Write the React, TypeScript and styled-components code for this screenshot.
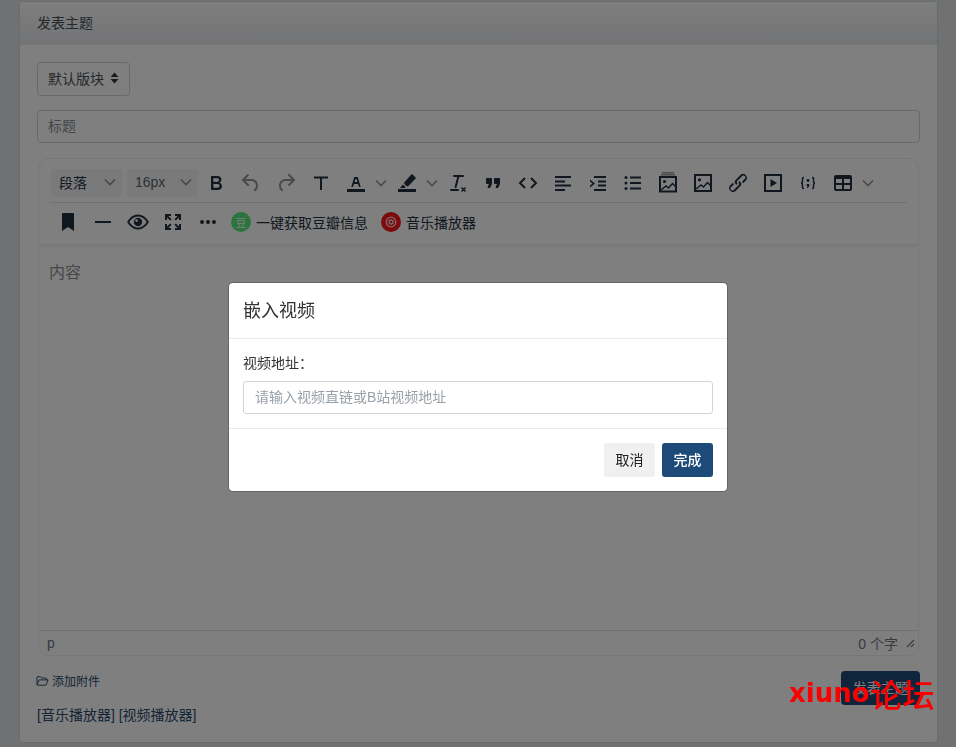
import * as React from 'react';
import styled, { createGlobalStyle } from 'styled-components';

const GlobalStyle = createGlobalStyle`
  html, body {
    margin: 0;
    padding: 0;
    background: #dee2e6;
    overflow: hidden;
  }
  body, input, button {
    font-family: "Liberation Sans", "Noto Sans CJK SC", sans-serif;
  }
  * { box-sizing: border-box; }
`;

const Page = styled.div`
  width: 956px;
  height: 747px;
  padding: 1px 18px 4px 19px;
`;

const Card = styled.main`
  height: 742px;
  background: #fff;
  border: 1px solid #d4d6d9;
  border-radius: 3px;
  display: flex;
  flex-direction: column;
`;

const CardHeader = styled.header`
  height: 43px;
  flex: none;
  padding: 0 17px 3px;
  display: flex;
  align-items: center;
  font-size: 14px;
  color: #495057;
  background: linear-gradient(#fcfdfd, #e6e8eb);
  border-bottom: 1px solid #eceef0;
`;

const CardBody = styled.div`
  flex: 1;
  padding: 17px 17px 0;
  display: flex;
  flex-direction: column;
`;

const ForumSelect = styled.div`
  width: 93px;
  height: 34px;
  border: 1px solid #ced4da;
  border-radius: 4px;
  padding: 0 10px 2px;
  display: flex;
  align-items: center;
  justify-content: space-between;
  font-size: 14px;
  color: #495057;
`;

const TitleInput = styled.input`
  display: block;
  width: 883px;
  height: 33px;
  margin-top: 14px;
  padding: 0 10px 2px;
  border: 1px solid #ced4da;
  border-radius: 4px;
  font-size: 14px;
  outline: none;
  &::placeholder { color: #868e96; opacity: 1; }
`;

const Editor = styled.section`
  width: 881px;
  height: 498px;
  margin: 15px 0 0 1px;
  border: 1px solid #eeeeee;
  border-radius: 10px;
  display: flex;
  flex-direction: column;
  overflow: hidden;
`;

const Toolbar = styled.div`
  flex: none;
  height: 85px;
  padding: 8px 11px 0 11px;
  box-shadow: 0 2px 4px rgba(34, 47, 62, 0.1);
`;

const ToolRow = styled.div<{ $divided?: boolean }>`
  height: ${(p) => (p.$divided ? '36px' : '37px')};
  display: flex;
  align-items: center;
  ${(p) => p.$divided && 'border-bottom: 1px solid #e3e3e3; padding-bottom: 4px; padding-left: 1px;'}
`;

const ToolSelect = styled.div<{ $light?: boolean }>`
  width: 71px;
  height: 28px;
  padding: 0 4px 2px 8px;
  display: flex;
  align-items: center;
  justify-content: space-between;
  flex: none;
  border-radius: 3px;
  background: #f4f4f4;
  font-size: 14px;
  color: ${(p) => (p.$light ? '#5a6571' : '#222f3e')};
  & + & { margin-left: 5px; }
`;

const ToolButton = styled.div<{ $faint?: boolean }>`
  width: 35px;
  height: 28px;
  flex: none;
  display: flex;
  align-items: center;
  justify-content: center;
  color: #222f3e;
  opacity: ${(p) => (p.$faint ? 0.5 : 1)};
`;

const ChevronSlot = styled.div`
  width: 16px;
  height: 28px;
  flex: none;
  display: flex;
  align-items: center;
  justify-content: center;
  color: #222f3e;
  opacity: 0.5;
`;

const PluginButton = styled.div<{ $first?: boolean }>`
  display: flex;
  align-items: center;
  flex: none;
  margin-left: ${(p) => (p.$first ? '6px' : '13px')};
  gap: 5px;
  font-size: 14px;
  color: #222f3e;
`;

const Badge = styled.span<{ $color: string }>`
  width: 20px;
  height: 20px;
  border-radius: 50%;
  background: ${(p) => p.$color};
  color: #fff;
  font-size: 11px;
  display: flex;
  align-items: center;
  justify-content: center;
`;

const Content = styled.div`
  flex: 1;
  padding: 17px 10px;
  font-size: 16px;
  line-height: 24px;
  color: #8a8f94;
`;

const StatusBar = styled.div`
  flex: none;
  height: 25px;
  border-top: 1px solid #e3e3e3;
  padding: 0 3px 0 8px;
  display: flex;
  align-items: center;
  justify-content: space-between;
  font-size: 14px;
  color: #6f7780;
`;

const WordCount = styled.div`
  display: flex;
  align-items: center;
  gap: 7px;
  font-size: 14px;
`;

const FooterRow = styled.div`
  display: flex;
  align-items: flex-start;
  justify-content: space-between;
  margin-top: 15px;
  width: 884px;
  margin-left: -1px;
`;

const AttachLink = styled.a`
  display: flex;
  align-items: center;
  gap: 3px;
  margin-top: 1px;
  font-size: 12px;
  color: #2a4a6e;
`;

const SubmitButton = styled.button`
  width: 79px;
  height: 34px;
  padding: 0 0 2px;
  border: 0;
  border-radius: 4px;
  background: #1c4a79;
  color: #fff;
  font-size: 14px;
`;

const PlayerLinks = styled.div`
  font-size: 14px;
  line-height: 20px;
  color: #2a4a6e;
`;

const Overlay = styled.div`
  position: fixed;
  inset: 0;
  background: rgba(0, 0, 0, 0.5);
  display: flex;
  justify-content: center;
  align-items: flex-start;
  padding-top: 282px;
`;

const Modal = styled.div`
  width: 500px;
  height: 210px;
  background: #fff;
  border-radius: 5px;
  border: 1px solid rgba(0, 0, 0, 0.2);
  background-clip: padding-box;
  display: flex;
  flex-direction: column;
`;

const ModalHeader = styled.div`
  height: 56px;
  flex: none;
  padding: 0 14px 3px;
  display: flex;
  align-items: center;
  font-size: 18px;
  color: #333;
  border-bottom: 1px solid #e9ecef;
`;

const ModalBody = styled.div`
  height: 90px;
  flex: none;
  padding: 14px 14px 0;
  border-bottom: 1px solid #e9ecef;
`;

const FieldLabel = styled.label`
  display: block;
  font-size: 14px;
  line-height: 20px;
  color: #333;
  margin-bottom: 8px;
`;

const UrlInput = styled.input`
  display: block;
  width: 470px;
  height: 33px;
  padding: 0 11px 2px;
  border: 1px solid #ced4da;
  border-radius: 3px;
  font-size: 14px;
  outline: none;
  &::placeholder { color: #99a1a8; opacity: 1; }
`;

const ModalFooter = styled.div`
  flex: 1;
  padding: 14px 14px 0;
  display: flex;
  justify-content: flex-end;
  gap: 7px;
`;

const DialogButton = styled.button<{ $primary?: boolean }>`
  width: 51px;
  height: 34px;
  padding: 0 0 3px;
  border: 0;
  border-radius: 3px;
  font-size: 14px;
  font-weight: ${(p) => (p.$primary ? 500 : 400)};
  background: ${(p) => (p.$primary ? '#1c4a79' : '#f0f0f0')};
  color: ${(p) => (p.$primary ? '#fff' : '#222')};
`;

const Watermark = styled.div`
  position: fixed;
  left: 789px;
  top: 673px;
  display: flex;
  align-items: center;
  color: #fb0000;
  font-family: "DejaVu Sans", sans-serif;
  font-size: 26px;
  line-height: 40px;
  font-weight: 700;
  white-space: nowrap;
`;

const WatermarkCjk = styled.span`
  margin-left: 1px;
  font-family: "Noto Sans CJK SC", sans-serif;
  font-size: 32px;
  font-weight: 500;
`;

type IconProps = { children: React.ReactNode; size?: number };

const Icon = ({ children, size = 24 }: IconProps) => (
  <svg width={size} height={size} viewBox="0 0 24 24" fill="currentColor">
    {children}
  </svg>
);

const Chevron = () => (
  <svg width="12" height="12" viewBox="0 0 12 12" fill="none" stroke="currentColor" strokeWidth="1.6">
    <path d="M1 3.5l5 5 5-5" />
  </svg>
);

const line = { fill: 'none', stroke: 'currentColor', strokeWidth: 2 };

const ToolIcons: Record<string, React.ReactNode> = {
  bold: (
    <path d="M7.8 19c-.3 0-.5 0-.6-.2l-.2-.5V5.7c0-.2 0-.4.2-.5l.6-.2h5c1.5 0 2.7.3 3.5 1 .7.6 1.1 1.4 1.1 2.5a3 3 0 01-.6 1.9c-.4.6-1 1-1.6 1.2.4.1.9.3 1.3.6s.8.7 1 1.2c.4.4.5 1 .5 1.6 0 1.3-.4 2.3-1.3 3-.8.7-2.1 1-3.8 1H7.8zm5-8.3c.6 0 1.2-.1 1.6-.5.4-.3.6-.7.6-1.3 0-1.1-.8-1.7-2.3-1.7H9.3v3.5h3.5zm.5 6c.7 0 1.3-.1 1.7-.4.4-.4.6-.9.6-1.5s-.2-1-.7-1.4c-.4-.3-1-.4-2-.4H9.4v3.8h4z" />
  ),
  undo: (
    <path d="M6.4 8H12c3.7 0 6.2 2 6.8 5.1.6 2.7-.4 5.6-2.3 6.8a1 1 0 01-1-1.8c1.1-.7 1.8-2.7 1.4-4.6-.5-2.1-2.1-3.5-4.9-3.5H6.4l3.3 3.3a1 1 0 11-1.4 1.4l-5-5a1 1 0 010-1.4l5-5a1 1 0 011.4 1.4L6.4 8z" />
  ),
  redo: (
    <path d="M17.6 10H12c-2.8 0-4.4 1.4-4.9 3.5-.4 2 .3 3.9 1.4 4.6a1 1 0 11-1 1.8c-2-1.2-2.9-4.1-2.3-6.8.6-3 3-5.1 6.8-5.1h5.6l-3.3-3.3a1 1 0 111.4-1.4l5 5a1 1 0 010 1.4l-5 5a1 1 0 01-1.4-1.4l3.3-3.3z" />
  ),
  size: <path d="M5 5.5h14v2h-6V19h-2V7.5H5z" />,
  color: (
    <>
      <path d="M3 18h18v3H3z" />
      <path d="M8.7 16h-.8a.5.5 0 01-.5-.6l2.7-9c.1-.3.3-.4.5-.4h2.8c.2 0 .4.1.5.4l2.7 9a.5.5 0 01-.5.6h-.8a.5.5 0 01-.4-.4l-.7-2.2c0-.3-.3-.4-.5-.4h-3.4c-.2 0-.4.1-.5.4l-.7 2.2c0 .3-.2.4-.4.4zm2.6-7.6l-.6 2a.5.5 0 00.5.6h1.6a.5.5 0 00.5-.6l-.6-2c0-.3-.3-.4-.5-.4h-.4c-.2 0-.4.1-.5.4z" />
    </>
  ),
  highlight: (
    <>
      <path d="M3 18h18v3H3z" />
      <path d="M16.3 3.6a1 1 0 011.4 0l2.7 2.7a1 1 0 010 1.4l-7 7.3-1.4.6-3-3 .6-1.5 6.7-7.5zM7.9 13.4l2.7 2.7-1 1H5l2.9-3.7z" />
    </>
  ),
  clear: (
    <>
      <path d="M13.2 6l-2.6 10.2a1 1 0 01-1 .8h-.2a.8.8 0 01-.8-1l2.6-10H8a1 1 0 110-2h9a1 1 0 010 2h-3.8zM5 18h7a1 1 0 010 2H5a1 1 0 010-2z" />
      <path d="M15.5 16.5l4 4m0-4l-4 4" fill="none" stroke="currentColor" strokeWidth="1.5" />
    </>
  ),
  quote: (
    <path d="M7.5 17h.9c.4 0 .7-.2.9-.6L11 13V8c0-.6-.4-1-1-1H6c-.6 0-1 .4-1 1v4c0 .6.4 1 1 1h2l-1.3 2.7a1 1 0 00.8 1.3zm8 0h.9c.4 0 .7-.2.9-.6L19 13V8c0-.6-.4-1-1-1h-4c-.6 0-1 .4-1 1v4c0 .6.4 1 1 1h2l-1.3 2.7a1 1 0 00.8 1.3z" />
  ),
  code: <path d="M9 7l-5 5 5 5M15 7l5 5-5 5" {...line} />,
  align: <path d="M4 5h16v2H4zM4 9.5h10v2H4zM4 13.5h16v2H4zM4 18h10v2H4z" />,
  indent: <path d="M8 5h12v2H8zM12 9.5h8v2h-8zM12 13.5h8v2h-8zM8 18h12v2H8zM4 8.5l5 4-5 4v-2l2.5-2L4 10.5z" />,
  list: (
    <>
      <path d="M9 5.5h11v2H9zM9 11h11v2H9zM9 16.5h11v2H9z" />
      <circle cx="5" cy="6.5" r="1.5" />
      <circle cx="5" cy="12" r="1.5" />
      <circle cx="5" cy="17.5" r="1.5" />
    </>
  ),
  gallery: (
    <>
      <path d="M6 1.5h12v.8H6zM5 3.5h14v.8H5z" />
      <rect x="4" y="6" width="16" height="14.5" {...line} />
      <circle cx="8.5" cy="10.5" r="1.6" />
      <path d="M5 19l5-4 2.5 2 4-4.5L20 16" {...line} strokeWidth={1.5} />
    </>
  ),
  image: (
    <>
      <rect x="4" y="4" width="16" height="16" {...line} />
      <circle cx="8.5" cy="8.8" r="1.6" />
      <path d="M5 18l5-4 2.5 2 4-4.5L20 15" {...line} strokeWidth={1.5} />
    </>
  ),
  link: (
    <path d="M6.2 12.3a1 1 0 011.4 1.4l-2 2a2 2 0 102.6 2.8l4.8-4.8a1 1 0 000-1.4 1 1 0 111.4-1.3 2.9 2.9 0 010 4L9.6 20a3.9 3.9 0 01-5.5-5.5l2-2zm11.6-.6a1 1 0 01-1.4-1.4l2-2a2 2 0 10-2.6-2.8L11 10.3a1 1 0 000 1.4A1 1 0 119.6 13a2.9 2.9 0 010-4L14.4 4a3.9 3.9 0 015.5 5.5l-2 2z" />
  ),
  media: (
    <>
      <rect x="4" y="4" width="16" height="16" {...line} />
      <path d="M9.5 8l6.5 4-6.5 4z" />
    </>
  ),
  codeblock: (
    <>
      <path d="M8 6.5c-2 0-1.5 1.5-1.5 3.2S5.5 12 5 12c.5 0 1.5.6 1.5 2.300s-.5 3.200 1.500 3.200M16 6.500c2 0 1.500 1.500 1.500 3.200s1 2.300 1.500 2.300c-.5 0-1.500.6-1.500 2.300s.5 3.200-1.500 3.200" fill="none" stroke="currentColor" strokeWidth="1.5" />
      <circle cx="12" cy="9.5" r="1.4" />
      <path d="M10.7 13h2.6v1.700l-1.400 2.300h-1l.7-2h-.9z" />
    </>
  ),
  table: (
    <path d="M19 4a2 2 0 012 2v12a2 2 0 01-2 2H5a2 2 0 01-2-2V6c0-1.100.9-2 2-2h14zM5 14v4h6v-4H5zm14 0h-6v4h6v-4zm0-6h-6v4h6V8zM5 12h6V8H5v4z" />
  ),
  bookmark: <path d="M6 4v17l6-4 6 4V4c0-.6-.4-1-1-1H7a1 1 0 00-1 1z" />,
  hr: <path d="M4 11h16v2H4z" />,
  eye: (
    <>
      <path
        fillRule="evenodd"
        d="M12 4.500c3.100 0 5.800 1.300 8.100 3.700a18 18 0 012.800 3.800 18 18 0 01-2.800 3.800c-2.300 2.400-5 3.700-8.100 3.700s-5.800-1.300-8.100-3.700A18 18 0 011.100 12a18 18 0 012.800-3.800C6.200 5.800 8.900 4.500 12 4.500zm0 2c-2.500 0-4.700 1.100-6.700 3.100A15 15 0 003.300 12a15 15 0 002 2.400c2 2 4.200 3.100 6.700 3.100s4.700-1.100 6.700-3.100a15 15 0 002-2.400 15 15 0 00-2-2.400c-2-2-4.200-3.100-6.700-3.100z"
      />
      <path
        fillRule="evenodd"
        d="M12 7.800a4.200 4.200 0 110 8.400 4.200 4.200 0 010-8.400zm-1.500 1.500a1.300 1.300 0 100 2.600 1.300 1.300 0 000-2.600z"
      />
    </>
  ),
  fullscreen: (
    <path d="M4 4h6v2H7.400l3.200 3.200-1.400 1.400L6 7.400V10H4zM20 4v6h-2V7.400l-3.200 3.200-1.400-1.400L16.600 6H14V4zM4 20v-6h2v2.600l3.200-3.200 1.400 1.400L7.400 18H10v2zM20 20h-6v-2h2.600l-3.200-3.200 1.400-1.400 3.200 3.200V14h2z" />
  ),
  more: (
    <>
      <circle cx="6" cy="12" r="2" />
      <circle cx="12" cy="12" r="2" />
      <circle cx="18" cy="12" r="2" />
    </>
  ),
};

const Tool = ({ name, faint }: { name: string; faint?: boolean }) => (
  <ToolButton $faint={faint}>
    <Icon>{ToolIcons[name]}</Icon>
  </ToolButton>
);

const SplitTool = ({ name }: { name: string }) => (
  <>
    <Tool name={name} />
    <ChevronSlot>
      <Chevron />
    </ChevronSlot>
  </>
);

const SortCaret = () => (
  <svg width="9" height="12" viewBox="0 0 9 12" fill="#343a40">
    <path d="M4.5 0.5L8.5 5H.5zM4.5 11.5L.5 7h8z" />
  </svg>
);

const FolderIcon = () => (
  <svg width="13" height="12" viewBox="0 0 13 12" fill="none" stroke="#2a4a6e" strokeWidth="1">
    <path d="M1 10V2.5a.8.8 0 01.8-.8h2.700l1.200 1.300h4a.8.8 0 01.8.8V5M1 10l2-4.800a.5.5 0 01.5-.3h8.500l-2 5a.5.5 0 01-.5.3H1.500" />
  </svg>
);

const ResizeGrip = () => (
  <svg width="10" height="10" viewBox="0 0 10 10" fill="none" stroke="#6f7780" strokeWidth="1.2">
    <path d="M9 2L2 9M9 6L6 9" />
  </svg>
);

const TargetIcon = () => (
  <svg width="12" height="12" viewBox="0 0 12 12" fill="none" stroke="#fff" strokeWidth="1.3" opacity="0.85">
    <circle cx="6" cy="6" r="4.8" />
    <circle cx="6" cy="6" r="2" />
  </svg>
);

export default function App() {
  return (
    <>
      <GlobalStyle />
      <Page>
        <Card>
          <CardHeader>发表主题</CardHeader>
          <CardBody>
            <ForumSelect>
              默认版块
              <SortCaret />
            </ForumSelect>
            <TitleInput placeholder="标题" readOnly />
            <Editor>
              <Toolbar>
                <ToolRow $divided>
                  <ToolSelect>
                    段落
                    <ChevronSlot>
                      <Chevron />
                    </ChevronSlot>
                  </ToolSelect>
                  <ToolSelect $light>
                    16px
                    <ChevronSlot>
                      <Chevron />
                    </ChevronSlot>
                  </ToolSelect>
                  <Tool name="bold" />
                  <Tool name="undo" faint />
                  <Tool name="redo" faint />
                  <Tool name="size" />
                  <SplitTool name="color" />
                  <SplitTool name="highlight" />
                  <Tool name="clear" />
                  <Tool name="quote" />
                  <Tool name="code" />
                  <Tool name="align" />
                  <Tool name="indent" />
                  <Tool name="list" />
                  <Tool name="gallery" />
                  <Tool name="image" />
                  <Tool name="link" />
                  <Tool name="media" />
                  <Tool name="codeblock" />
                  <Tool name="table" />
                  <ChevronSlot>
                    <Chevron />
                  </ChevronSlot>
                </ToolRow>
                <ToolRow>
                  <Tool name="bookmark" />
                  <Tool name="hr" />
                  <Tool name="eye" />
                  <Tool name="fullscreen" />
                  <Tool name="more" />
                  <PluginButton $first>
                    <Badge $color="#58e87a">豆</Badge>
                    一键获取豆瓣信息
                  </PluginButton>
                  <PluginButton>
                    <Badge $color="#fa1418">
                      <TargetIcon />
                    </Badge>
                    音乐播放器
                  </PluginButton>
                </ToolRow>
              </Toolbar>
              <Content>内容</Content>
              <StatusBar>
                <span>p</span>
                <WordCount>
                  0 个字
                  <ResizeGrip />
                </WordCount>
              </StatusBar>
            </Editor>
            <FooterRow>
              <AttachLink>
                <FolderIcon />
                添加附件
              </AttachLink>
              <SubmitButton>发表主题</SubmitButton>
            </FooterRow>
            <PlayerLinks>[音乐播放器] [视频播放器]</PlayerLinks>
          </CardBody>
        </Card>
      </Page>
      <Overlay>
        <Modal>
          <ModalHeader>嵌入视频</ModalHeader>
          <ModalBody>
            <FieldLabel>视频地址：</FieldLabel>
            <UrlInput placeholder="请输入视频直链或B站视频地址" readOnly />
          </ModalBody>
          <ModalFooter>
            <DialogButton>取消</DialogButton>
            <DialogButton $primary>完成</DialogButton>
          </ModalFooter>
        </Modal>
      </Overlay>
      <Watermark>
        xiuno
        <WatermarkCjk>论坛</WatermarkCjk>
      </Watermark>
    </>
  );
}
